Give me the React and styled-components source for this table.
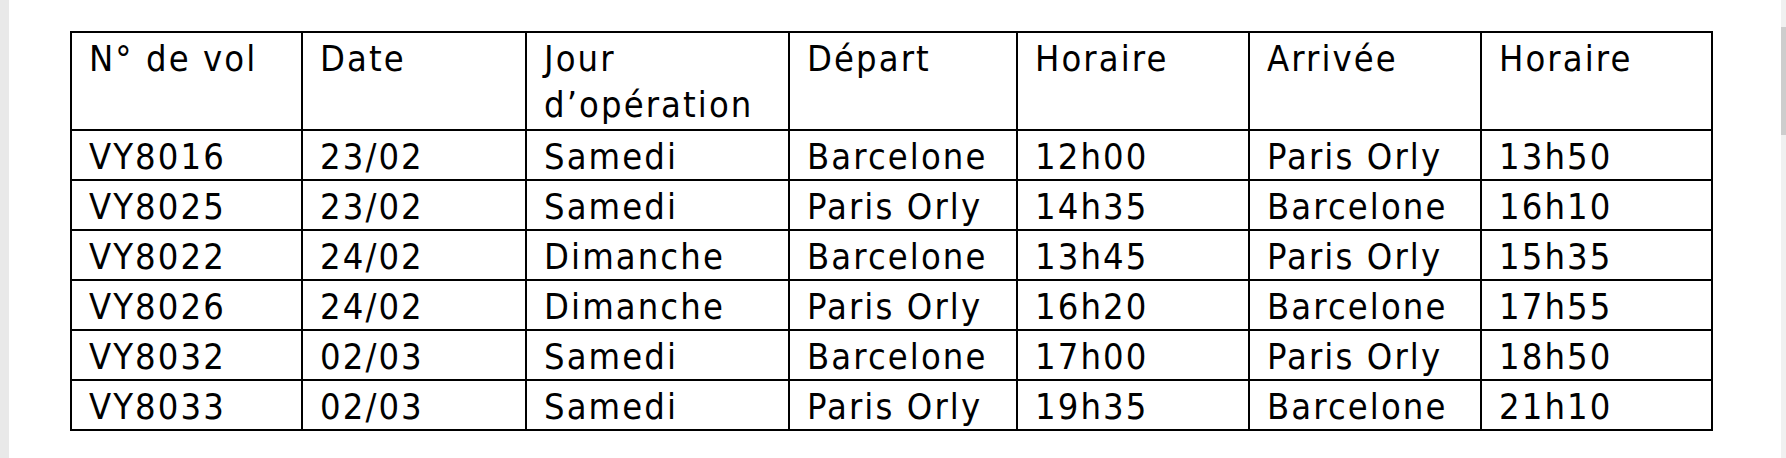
import React from "react";
import styled, { createGlobalStyle } from "styled-components";

const GlobalStyle = createGlobalStyle`
  html, body {
    margin: 0;
    padding: 0;
    background: #ffffff;
    overflow: hidden;
  }
`;

const Page = styled.div`
  display: flex;
  height: 458px;
  width: 1786px;
`;

const Gutter = styled.div`
  width: 9px;
  flex: none;
  background: #e9e9e9;
`;

const Sheet = styled.div`
  flex: 1;
  background: #ffffff;
  padding: 31px 0 0 61px;
`;

const Scrollbar = styled.div`
  width: 5px;
  flex: none;
  background: #f0f0f0;
  padding-top: 27px;
  box-sizing: border-box;
`;

const Thumb = styled.div`
  height: 108px;
  background: #cdcdcd;
`;

const Table = styled.table`
  border-collapse: collapse;
  table-layout: fixed;
  width: 1643px;
  font-family: "DejaVu Sans Condensed", "DejaVu Sans", sans-serif;
  font-size: 36px;
  letter-spacing: 2.1px;
  color: #000;
`;

const HeadRow = styled.tr`
  height: 98px;
`;

const Row = styled.tr`
  height: 49.7px;
`;

const Cell = styled.td`
  border: 2px solid #000;
  padding: 3px 6px 0 17px;
  line-height: 45px;
  vertical-align: top;
  white-space: ${(p) => (p.$wrap ? "normal" : "nowrap")};
  overflow: hidden;
`;

const HeadCell = styled(Cell).attrs({ as: "th" })`
  font-weight: normal;
  text-align: left;
  line-height: 46px;
`;

const widths = [231, 224, 263, 228, 232, 232, 231];

const headers = [
  "N° de vol",
  "Date",
  "Jour d’opération",
  "Départ",
  "Horaire",
  "Arrivée",
  "Horaire",
];

const rows = [
  ["VY8016", "23/02", "Samedi", "Barcelone", "12h00", "Paris Orly", "13h50"],
  ["VY8025", "23/02", "Samedi", "Paris Orly", "14h35", "Barcelone", "16h10"],
  ["VY8022", "24/02", "Dimanche", "Barcelone", "13h45", "Paris Orly", "15h35"],
  ["VY8026", "24/02", "Dimanche", "Paris Orly", "16h20", "Barcelone", "17h55"],
  ["VY8032", "02/03", "Samedi", "Barcelone", "17h00", "Paris Orly", "18h50"],
  ["VY8033", "02/03", "Samedi", "Paris Orly", "19h35", "Barcelone", "21h10"],
];

export default function App() {
  return (
    <>
      <GlobalStyle />
      <Page>
        <Gutter />
        <Sheet>
          <Table>
            <colgroup>
              {widths.map((w, i) => (
                <col key={i} style={{ width: w }} />
              ))}
            </colgroup>
            <thead>
              <HeadRow>
                {headers.map((h, i) => (
                  <HeadCell key={i} $wrap>
                    {h}
                  </HeadCell>
                ))}
              </HeadRow>
            </thead>
            <tbody>
              {rows.map((r, i) => (
                <Row key={i}>
                  {r.map((c, j) => (
                    <Cell key={j}>{c}</Cell>
                  ))}
                </Row>
              ))}
            </tbody>
          </Table>
        </Sheet>
        <Scrollbar>
          <Thumb />
        </Scrollbar>
      </Page>
    </>
  );
}
